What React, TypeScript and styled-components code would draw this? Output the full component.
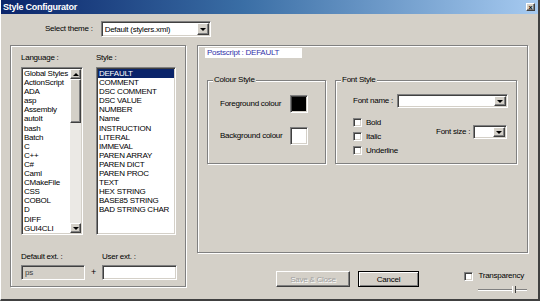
import styled, { createGlobalStyle, css } from "styled-components";

const GlobalStyle = createGlobalStyle`
  body {
    margin: 0;
    background: #d4d0c8;
    font-family: "Liberation Sans", Tahoma, sans-serif;
    letter-spacing: -0.25px;
    color: #000;
  }
`;

const sunken = css`
  box-sizing: border-box;
  border-style: solid;
  border-width: 1px;
  border-color: #808080 #ffffff #ffffff #808080;
  box-shadow: inset 1px 1px 0 #404040, inset -1px -1px 0 #d4d0c8;
`;

const raised = css`
  box-sizing: border-box;
  border-style: solid;
  border-width: 1px;
  border-color: #ffffff #404040 #404040 #ffffff;
  box-shadow: inset -1px -1px 0 #808080;
  background: #d4d0c8;
`;

const etched = css`
  box-sizing: border-box;
  border: 1px solid #808080;
  box-shadow: inset 1px 1px 0 #ffffff, 1px 1px 0 #ffffff;
`;

const S = {
  Window: styled.div`
    width: 540px;
    height: 301px;
    box-sizing: border-box;
    display: flex;
    flex-direction: column;
    background: #d4d0c8;
    border-right: 2px solid #404040;
    border-bottom: 2px solid #404040;
    border-left: 1px solid #ffffff;
    overflow: hidden;
    font-size: 8px;
  `,
  TitleBar: styled.div`
    height: 14px;
    display: flex;
    align-items: center;
    justify-content: space-between;
    padding: 0 3px 0 2px;
    background: linear-gradient(90deg, #0a246a 0%, #3a6ea5 45%, #a6caf0 100%);
  `,
  Title: styled.span`
    color: #fff;
    font-weight: 700;
    font-size: 9px;
  `,
  CloseBtn: styled.div`
    ${raised};
    width: 9px;
    height: 8px;
    display: flex;
    align-items: center;
    justify-content: center;
    font-size: 7px;
    line-height: 1;
    font-weight: 700;
  `,
  ThemeRow: styled.div`
    display: flex;
    align-items: center;
    gap: 8px;
    margin-top: 7px;
    padding-left: 44px;
    height: 16px;
  `,
  Label: styled.span<{ $dim?: boolean }>`
    font-size: 8px;
    line-height: 10px;
    white-space: nowrap;
    color: ${(p) => (p.$dim ? "#808080" : "#000")};
  `,
  Combo: styled.div<{ $w: number; $h: number }>`
    ${sunken};
    width: ${(p) => p.$w}px;
    height: ${(p) => p.$h}px;
    background: #fff;
    display: flex;
    align-items: stretch;
    padding: 1px;
  `,
  ComboText: styled.span`
    flex: 1;
    font-size: 8px;
    display: flex;
    align-items: center;
    padding-left: 2px;
  `,
  DropBtn: styled.div`
    ${raised};
    width: 12px;
    display: flex;
    align-items: center;
    justify-content: center;
  `,
  Arrow: styled.span<{ $up?: boolean }>`
    width: 0;
    height: 0;
    border-left: 3px solid transparent;
    border-right: 3px solid transparent;
    ${(p) =>
      p.$up ? "border-bottom: 3px solid #000;" : "border-top: 3px solid #000;"}
  `,
  Body: styled.div`
    display: flex;
    gap: 11px;
    margin-top: 8px;
    padding-left: 9px;
  `,
  LeftGroup: styled.div`
    ${etched};
    width: 176px;
    height: 242px;
    padding: 7px 0 0 10px;
    display: flex;
    flex-direction: column;
  `,
  Lists: styled.div`
    display: flex;
    gap: 13px;
  `,
  ListCol: styled.div<{ $w: number }>`
    width: ${(p) => p.$w}px;
    display: flex;
    flex-direction: column;
    gap: 4px;
  `,
  ListBox: styled.div`
    ${sunken};
    height: 168px;
    background: #fff;
    display: flex;
    padding: 1px;
  `,
  Items: styled.div`
    flex: 1;
    display: flex;
    flex-direction: column;
    overflow: hidden;
  `,
  Item: styled.div<{ $sel?: boolean }>`
    flex: none;
    height: 9.1px;
    line-height: 9.1px;
    font-size: 8px;
    padding-left: 1px;
    white-space: nowrap;
    background: ${(p) => (p.$sel ? "#0a246a" : "transparent")};
    color: ${(p) => (p.$sel ? "#fff" : "#000")};
  `,
  ScrollBar: styled.div`
    width: 11px;
    display: flex;
    flex-direction: column;
    background: #ebe9e5;
  `,
  ScrollBtn: styled.div`
    ${raised};
    height: 10px;
    display: flex;
    align-items: center;
    justify-content: center;
  `,
  Thumb: styled.div`
    ${raised};
    height: 44px;
  `,
  Track: styled.div`
    flex: 1;
  `,
  ExtRow: styled.div`
    display: flex;
    align-items: flex-end;
    margin-top: 15px;
  `,
  ExtCol: styled.div<{ $w: number; $pad?: number }>`
    width: ${(p) => p.$w}px;
    display: flex;
    flex-direction: column;
    gap: 3px;
    padding-top: ${(p) => p.$pad ?? 0}px;
  `,
  ExtBox: styled.div<{ $off?: boolean }>`
    ${sunken};
    height: 15px;
    background: ${(p) => (p.$off ? "#d4d0c8" : "#fff")};
    font-size: 8px;
    line-height: 13px;
    padding-left: 3px;
    color: #404040;
  `,
  Plus: styled.span`
    width: 17px;
    height: 15px;
    line-height: 15px;
    text-align: center;
    font-size: 9px;
  `,
  RightCol: styled.div`
    width: 331px;
    display: flex;
    flex-direction: column;
  `,
  RightGroup: styled.div`
    ${etched};
    height: 208px;
    padding: 2px 0 0 7px;
  `,
  Postscript: styled.div`
    width: 97px;
    height: 10px;
    background: #fff;
    color: #3333aa;
    font-size: 8px;
    line-height: 10px;
    padding-left: 2px;
    box-sizing: border-box;
  `,
  SubGroups: styled.div`
    display: flex;
    gap: 9px;
    margin-top: 22px;
    padding-left: 2px;
  `,
  GroupBox: styled.div<{ $w: number }>`
    ${etched};
    position: relative;
    width: ${(p) => p.$w}px;
    height: 84px;
  `,
  Caption: styled.span`
    position: absolute;
    top: -6px;
    left: 5px;
    padding: 0 1px;
    background: #d4d0c8;
    font-size: 8px;
    line-height: 10px;
  `,
  ColourGrid: styled.div`
    display: grid;
    grid-template-columns: 70px 18px;
    row-gap: 14px;
    align-items: center;
    padding: 14px 0 0 12px;
  `,
  Swatch: styled.div<{ $c: string }>`
    ${sunken};
    width: 18px;
    height: 18px;
    background: ${(p) => p.$c};
  `,
  FontBody: styled.div`
    padding: 13px 0 0 17px;
    display: flex;
    flex-direction: column;
  `,
  FontNameRow: styled.div`
    display: flex;
    align-items: center;
    gap: 4px;
  `,
  FontLower: styled.div`
    display: flex;
    margin-top: 10px;
  `,
  Checks: styled.div`
    width: 83px;
    display: flex;
    flex-direction: column;
    gap: 5px;
  `,
  CheckRow: styled.label`
    display: flex;
    align-items: center;
    gap: 4px;
    height: 9px;
  `,
  CheckBox: styled.span`
    ${sunken};
    width: 9px;
    height: 9px;
    background: #fff;
    display: inline-block;
  `,
  SizeRow: styled.div`
    display: flex;
    align-items: center;
    gap: 3px;
    margin-top: 7px;
    height: 14px;
  `,
  Footer: styled.div`
    display: flex;
    align-items: flex-start;
    padding: 18px 1px 0 79px;
  `,
  Buttons: styled.div`
    display: flex;
    gap: 8px;
  `,
  Button: styled.button<{ $w: number; $def?: boolean }>`
    ${raised};
    width: ${(p) => p.$w}px;
    height: 16px;
    padding: 0;
    font-family: inherit;
    letter-spacing: inherit;
    font-size: 8px;
    color: ${(p) => (p.disabled ? "#a0a0a0" : "#000")};
    text-shadow: ${(p) => (p.disabled ? "1px 1px 0 #fff" : "none")};
    ${(p) =>
      p.$def &&
      css`
        border-color: #000;
        box-shadow: inset 1px 1px 0 #fff, inset -1px -1px 0 #808080;
      `}
  `,
  Transp: styled.div`
    margin-left: auto;
    display: flex;
    flex-direction: column;
    align-items: flex-end;
  `,
  TranspRow: styled.label`
    display: flex;
    align-items: center;
    gap: 5px;
    margin-right: 3px;
  `,
  Slider: styled.div`
    position: relative;
    width: 49px;
    height: 7px;
    margin-top: 8px;
    border-top: 1px solid #808080;
    box-shadow: inset 0 1px 0 #fff;
  `,
  SliderThumb: styled.span`
    position: absolute;
    left: 34px;
    top: -4px;
    width: 2px;
    height: 7px;
    background: #d4d0c8;
    border-right: 1px solid #404040;
    border-left: 1px solid #fff;
  `,
};

const languages = [
  "Global Styles",
  "ActionScript",
  "ADA",
  "asp",
  "Assembly",
  "autoIt",
  "bash",
  "Batch",
  "C",
  "C++",
  "C#",
  "Caml",
  "CMakeFile",
  "CSS",
  "COBOL",
  "D",
  "DIFF",
  "GUI4CLI",
];

const styles = [
  "DEFAULT",
  "COMMENT",
  "DSC COMMENT",
  "DSC VALUE",
  "NUMBER",
  "Name",
  "INSTRUCTION",
  "LITERAL",
  "IMMEVAL",
  "PAREN ARRAY",
  "PAREN DICT",
  "PAREN PROC",
  "TEXT",
  "HEX STRING",
  "BASE85 STRING",
  "BAD STRING CHAR",
];

const Combo = ({ w, h, text }: { w: number; h: number; text?: string }) => (
  <S.Combo $w={w} $h={h}>
    <S.ComboText>{text}</S.ComboText>
    <S.DropBtn>
      <S.Arrow />
    </S.DropBtn>
  </S.Combo>
);

const Check = ({ label }: { label: string }) => (
  <S.CheckRow>
    <S.CheckBox />
    <S.Label>{label}</S.Label>
  </S.CheckRow>
);

const App = () => {
  return (
    <>
      <GlobalStyle />
      <S.Window>
        <S.TitleBar>
          <S.Title>Style Configurator</S.Title>
          <S.CloseBtn>×</S.CloseBtn>
        </S.TitleBar>

        <S.ThemeRow>
          <S.Label>Select theme :</S.Label>
          <Combo w={110} h={16} text="Default (stylers.xml)" />
        </S.ThemeRow>

        <S.Body>
          <S.LeftGroup>
            <S.Lists>
              <S.ListCol $w={62}>
                <S.Label>Language :</S.Label>
                <S.ListBox>
                  <S.Items>
                    {languages.map((l) => (
                      <S.Item key={l}>{l}</S.Item>
                    ))}
                  </S.Items>
                  <S.ScrollBar>
                    <S.ScrollBtn>
                      <S.Arrow $up />
                    </S.ScrollBtn>
                    <S.Thumb />
                    <S.Track />
                    <S.ScrollBtn>
                      <S.Arrow />
                    </S.ScrollBtn>
                  </S.ScrollBar>
                </S.ListBox>
              </S.ListCol>
              <S.ListCol $w={80}>
                <S.Label>Style :</S.Label>
                <S.ListBox>
                  <S.Items>
                    {styles.map((s, i) => (
                      <S.Item key={s} $sel={i === 0}>
                        {s}
                      </S.Item>
                    ))}
                  </S.Items>
                </S.ListBox>
              </S.ListCol>
            </S.Lists>

            <S.ExtRow>
              <S.ExtCol $w={64}>
                <S.Label>Default ext. :</S.Label>
                <S.ExtBox $off>ps</S.ExtBox>
              </S.ExtCol>
              <S.Plus>+</S.Plus>
              <S.ExtCol $w={75} $pad={2}>
                <S.Label>User ext. :</S.Label>
                <S.ExtBox />
              </S.ExtCol>
            </S.ExtRow>
          </S.LeftGroup>

          <S.RightCol>
            <S.RightGroup>
              <S.Postscript>Postscript : DEFAULT</S.Postscript>
              <S.SubGroups>
                <S.GroupBox $w={119}>
                  <S.Caption>Colour Style</S.Caption>
                  <S.ColourGrid>
                    <S.Label>Foreground colour</S.Label>
                    <S.Swatch $c="#000" />
                    <S.Label>Background colour</S.Label>
                    <S.Swatch $c="#fff" />
                  </S.ColourGrid>
                </S.GroupBox>
                <S.GroupBox $w={182}>
                  <S.Caption>Font Style</S.Caption>
                  <S.FontBody>
                    <S.FontNameRow>
                      <S.Label>Font name :</S.Label>
                      <Combo w={111} h={14} />
                    </S.FontNameRow>
                    <S.FontLower>
                      <S.Checks>
                        <Check label="Bold" />
                        <Check label="Italic" />
                        <Check label="Underline" />
                      </S.Checks>
                      <S.SizeRow>
                        <S.Label>Font size :</S.Label>
                        <Combo w={34} h={14} />
                      </S.SizeRow>
                    </S.FontLower>
                  </S.FontBody>
                </S.GroupBox>
              </S.SubGroups>
            </S.RightGroup>

            <S.Footer>
              <S.Buttons>
                <S.Button $w={74} disabled>
                  Save &amp; Close
                </S.Button>
                <S.Button $w={61} $def>
                  Cancel
                </S.Button>
              </S.Buttons>
              <S.Transp>
                <S.TranspRow>
                  <S.CheckBox />
                  <S.Label>Transparency</S.Label>
                </S.TranspRow>
                <S.Slider>
                  <S.SliderThumb />
                </S.Slider>
              </S.Transp>
            </S.Footer>
          </S.RightCol>
        </S.Body>
      </S.Window>
    </>
  );
};

export default App;
